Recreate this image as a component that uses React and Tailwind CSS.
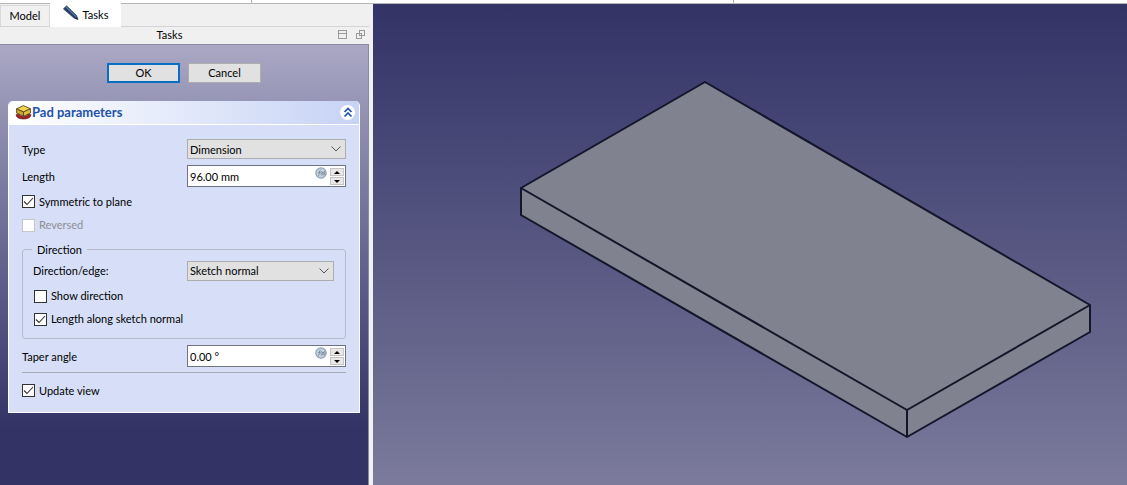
const FONT = "font-['Lato',sans-serif]";

function Chevron() {
  return (
    <svg width="10" height="6" viewBox="0 0 10 6" fill="none" stroke="#555" strokeWidth="1">
      <path d="M0.5 0.5 L5 5 L9.5 0.5" />
    </svg>
  );
}

function Combo({ value, className, flat }) {
  return (
    <div className={`h-5 flex items-center justify-between pl-[2px] pr-[4px] bg-[#e1e1e1] border border-[#adadad] ${className}`}>
      <span className={flat ? '' : 'pt-[2px]'}>{value}</span>
      <Chevron />
    </div>
  );
}

function FxIcon() {
  return (
    <svg width="12" height="12" viewBox="0 0 12 12" fill="none" className="absolute right-[18px] top-[1px]">
      <circle cx="6" cy="6" r="5.2" fill="#c4d2de" stroke="#8ea3b5" strokeWidth="1.2" />
      <path d="M3 9 C4.5 9 4 3 5.5 3 M3.2 5.5 H5.4 M6.5 4 C5.8 6 6 7.5 6.7 8.5 M9.4 4 C10 6 9.8 7.5 9.2 8.5 M7.2 5 L8.8 7.8 M8.8 5 L7.2 7.8" stroke="#6f8599" strokeWidth="0.8" />
    </svg>
  );
}

function SpinInput({ value }) {
  return (
    <div className="relative w-[159px] h-[22px] flex items-center pl-[2px] bg-white border border-[#6f7480]">
      <span className="pt-[2px]">{value}</span>
      <FxIcon />
      <div className="absolute right-[1px] top-[2px] w-[14px] h-[17px] flex flex-col gap-px">
        <div className="h-2 flex items-center justify-center bg-[#e8e8e8] border border-[#c4c4c4]">
          <div className="w-0 h-0 border-x-[3px] border-x-transparent border-b-[3px] border-b-black" />
        </div>
        <div className="h-2 flex items-center justify-center bg-[#e8e8e8] border border-[#c4c4c4]">
          <div className="w-0 h-0 border-x-[3px] border-x-transparent border-t-[3px] border-t-black" />
        </div>
      </div>
    </div>
  );
}

function Check({ label, checked, disabled, flat, className }) {
  return (
    <div className={`flex items-center gap-[4px] h-[14px] ${disabled ? 'text-[#8b8d94]' : ''} ${className}`}>
      <div className={`w-[13px] h-[13px] flex items-center justify-center bg-white border ${disabled ? 'border-[#c4c6cc]' : 'border-[#333]'}`}>
        {checked && (
          <svg width="11" height="9" viewBox="0 0 11 9" fill="none" stroke="#333" strokeWidth="1.1">
            <path d="M1 4.5 L4 7.5 L10 1" />
          </svg>
        )}
      </div>
      <span className={flat ? '' : 'pt-[2px]'}>{label}</span>
    </div>
  );
}

function PadIcon() {
  return (
    <svg width="17" height="17" viewBox="0 0 16 16" className="shrink-0">
      <path d="M1 10 C1 15.5 15 15.5 15 10 L12 9.5 C12 12.5 4 12.5 4 9.5 Z" fill="#a5232a" stroke="#5a1015" strokeWidth="0.6" />
      <path d="M1.5 4.5 L8 1.5 L14.5 4.5 L8 7.5 Z" fill="#f3d34f" stroke="#4f4314" strokeWidth="0.8" />
      <path d="M1.5 4.5 L8 7.5 V11.5 L1.5 8.5 Z" fill="#c9a52c" stroke="#4f4314" strokeWidth="0.8" />
      <path d="M14.5 4.5 L8 7.5 V11.5 L14.5 8.5 Z" fill="#e3bf3a" stroke="#4f4314" strokeWidth="0.8" />
    </svg>
  );
}

function PencilIcon() {
  return (
    <svg width="16" height="16" viewBox="0 0 16 16" className="shrink-0 -mt-[4px]">
      <path d="M0.5 4 L3.5 0.8 L13.5 10.5 L15 14.5 L11 13 Z" fill="#30507c" stroke="#1d2f4e" strokeWidth="0.7" />
      <path d="M1.8 3 L12.5 13" stroke="#1d3558" strokeWidth="1" />
      <path d="M3 1.8 L13 11.5" stroke="#7d9cc4" strokeWidth="0.8" />
      <path d="M13 12 L15 14.5 L12 13.5 Z" fill="#222" />
    </svg>
  );
}

function CollapseButton() {
  return (
    <div className="w-[15px] h-[15px] rounded-full bg-white flex items-center justify-center">
      <svg width="10" height="11" viewBox="0 0 10 11" fill="none" stroke="#2352a8" strokeWidth="1.7">
        <path d="M1.5 5 L5 1.5 L8.5 5 M1.5 9.5 L5 6 L8.5 9.5" />
      </svg>
    </div>
  );
}

function Viewport() {
  return (
    <div className="flex-1 h-full bg-gradient-to-b from-[#333366] to-[#7c7b9c]">
      <svg width="754" height="481" viewBox="373 4 754 481" className="block">
        <path d="M705 82 L1090 305 L907 410 L521 188 Z" fill="#81828f" />
        <path d="M521 188 L907 410 V437 L521 215 Z" fill="#81828f" />
        <path d="M907 410 L1090 305 V332 L907 437 Z" fill="#81828f" />
        <path
          d="M705 82 L1090 305 L907 410 L521 188 Z M521 188 V215 L907 437 V410 M907 437 L1090 332 V305"
          fill="none"
          stroke="#14142a"
          strokeWidth="2"
          strokeLinejoin="round"
        />
      </svg>
    </div>
  );
}

export default function App() {
  return (
    <div className={`${FONT} w-[1127px] h-[485px] overflow-hidden bg-[#f0f0f0] text-[11px] text-black flex flex-col`}>
      <div className="h-1 shrink-0 flex bg-white border-b border-[#b5b5b5]">
        <div className="w-[252px] border-r border-[#b5b5b5]" />
        <div className="w-[482px] border-r border-[#b5b5b5]" />
      </div>
      <div className="flex flex-1 min-h-0">
        <div className="w-[373px] shrink-0 flex flex-col">
          <div className="h-[23px] shrink-0 flex items-end border-b border-[#d4d4d4] mr-[4px]">
            <div className="w-[50px] h-[21px] flex items-center justify-center bg-[#f0f0f0] border border-[#d9d9d9] border-b-0">Model</div>
            <div className="w-[71px] h-[24px] flex items-center justify-center gap-[4px] bg-white -mb-px">
              <PencilIcon />
              <span>Tasks</span>
            </div>
          </div>
          <div className="h-[17px] shrink-0 relative flex items-center justify-center pr-[30px] bg-[#f0f0f0] mr-[4px]">
            <span>Tasks</span>
            <div className="absolute right-[22px] top-[3px] w-[9px] h-[9px] border border-[#9a9a9a]">
              <div className="h-[3px] border-b border-[#9a9a9a]" />
            </div>
            <div className="absolute right-[4px] top-[3px] w-[9px] h-[9px]">
              <div className="absolute left-0 bottom-0 w-[6px] h-[6px] border border-[#9a9a9a] bg-[#f0f0f0]" />
              <div className="absolute right-0 top-0 w-[6px] h-[6px] border border-[#9a9a9a] -z-0" />
            </div>
          </div>
          <div className="flex-1 min-h-0 mr-[4px] border-t border-r border-[#8a8aa0] bg-gradient-to-b from-[#aaa8c4] via-[#333366] via-[87%] to-[#333366] px-2 pt-[18px] flex flex-col">
            <div className="flex justify-center gap-[8px]">
              <div className="w-[73px] h-5 flex items-center justify-center bg-[#e1e1e1] border-2 border-[#0a6fc4]">OK</div>
              <div className="w-[73px] h-5 flex items-center justify-center bg-[#e1e1e1] border border-[#adadad]">Cancel</div>
            </div>
            <div className="mt-[18px] w-[352px] h-[312px] rounded-t-[5px] bg-[#d6dff7] border-x border-b border-white flex flex-col">
              <div className="h-6 shrink-0 rounded-t-[5px] pl-[6px] pr-[4px] flex items-center bg-gradient-to-r from-white to-[#c7d3f5] border-b border-white">
                <PadIcon />
                <span className="font-bold text-[#2352a8] text-[13px]">Pad parameters</span>
                <div className="flex-1" />
                <CollapseButton />
              </div>
              <div className="flex-1 pl-[13px] pr-[13px] pt-[14px] flex flex-col">
                <div className="h-5 flex items-center justify-between">
                  <span className="pt-[2px]">Type</span>
                  <Combo value="Dimension" className="w-[159px]" />
                </div>
                <div className="h-[22px] mt-[6px] flex items-center justify-between">
                  <span className="pt-[2px]">Length</span>
                  <SpinInput value="96.00 mm" />
                </div>
                <Check label="Symmetric to plane" checked className="mt-[7px]" />
                <Check label="Reversed" disabled flat className="mt-[10px]" />
                <div className="relative mt-[17px] h-[90px] rounded-[3px] border border-[#b5bcc9] pl-[10px] pr-[11px] pt-[11px] flex flex-col">
                  <span className="absolute left-[9px] -top-[9px] px-[5px] bg-[#d6dff7] leading-[17px]">Direction</span>
                  <div className="h-5 flex items-center justify-between">
                    <span>Direction/edge:</span>
                    <Combo value="Sketch normal" flat className="w-[147px]" />
                  </div>
                  <Check label="Show direction" flat className="mt-[8px] ml-px" />
                  <Check label="Length along sketch normal" checked flat className="mt-[9px] ml-px" />
                </div>
                <div className="h-[22px] mt-[6px] flex items-center justify-between">
                  <span className="pt-[2px]">Taper angle</span>
                  <SpinInput value="0.00 °" />
                </div>
                <div className="h-px mt-[5px] bg-[#a6abb5]" />
                <Check label="Update view" checked className="mt-[10px]" />
              </div>
            </div>
          </div>
        </div>
        <Viewport />
      </div>
    </div>
  );
}
